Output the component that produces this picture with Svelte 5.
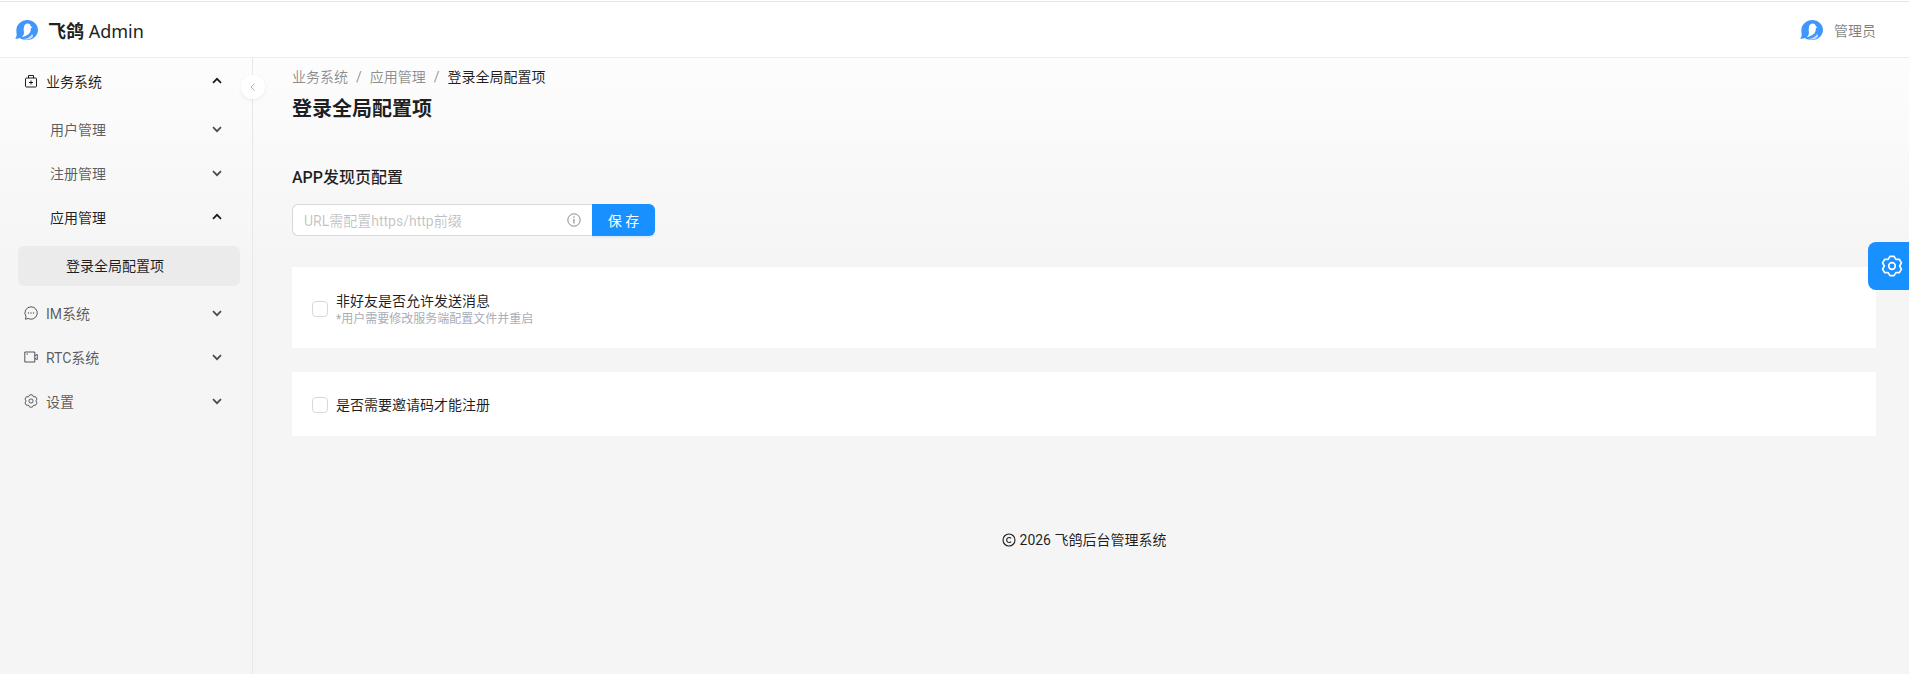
<script lang="ts">
// six-lobed cog, same outline for the menu icon and the floating button
function cogPath() {
	const pt = (deg: number, r: number) => {
		const a = (deg * Math.PI) / 180;
		return `${(12 + r * Math.cos(a)).toFixed(2)} ${(12 + r * Math.sin(a)).toFixed(2)}`;
	};
	let d = "";
	for (let i = 0; i < 6; i++) {
		const a = -90 + 60 * i;
		d += `${i ? "L" : "M"}${pt(a - 12, 10.8)} L${pt(a + 12, 10.8)} L${pt(a + 30, 8.4)} `;
	}
	return d + "Z";
}
const gear = cogPath();
</script>

{#snippet logo()}
  <svg class="logo" viewBox="0 0 67 58" aria-hidden="true">
    <path fill="#3f97fb" d="M36 0c17 0 31 13 31 29S53 58 36 58c-9 0-17-2-22-6-4 2-9 3-14 2 3-3 5-7 5-12-1-4-1-8-1-13C4 13 19 0 36 0z" />
    <path fill="#fff" d="M37 10c5 0 8 3 9 8l5 4-5 1c1 8-2 15-9 20-5 3-11 6-18 7 5-4 8-9 7-16-1-5-1-8 0-12 1-8 5-12 11-12z" />
    <path fill="#c5e0ff" d="M50 40c-2 5-7 9-13 12-5 2-10 3-15 3 5 2 10 3 15 2 7-1 12-4 16-10z" />
  </svg>
{/snippet}

{#snippet arrow(open)}
  <svg class="arrow" class:open viewBox="0 0 12 12" aria-hidden="true">
    <path d="M2 4.200 6 8.200l4-4" fill="none" stroke="currentColor" stroke-width="1.700" />
  </svg>
{/snippet}

<div class="page">
  <header class="top">
    <div class="brand">
      {@render logo()}
      <span class="brand-name"><b>飞鸽</b> Admin</span>
    </div>
    <div class="user">
      {@render logo()}
      <span>管理员</span>
    </div>
  </header>

  <div class="body">
    <aside class="side">
      <nav class="menu">
        <div class="group">
          <div class="item strong">
            <span class="label">
              <svg class="ico" viewBox="0 0 14 14" aria-hidden="true"><path d="M2.500 4h9a1 1 0 0 1 1 1v7a1 1 0 0 1-1 1h-9a1 1 0 0 1-1-1V5a1 1 0 0 1 1-1zM4.500 4V1.500h5V4M7 6.500v4M5 8.500h4" fill="none" stroke="currentColor" stroke-linejoin="round" /></svg>
              业务系统
            </span>
            {@render arrow(true)}
          </div>
          <div class="sub outer">
            <div class="item level2"><span>用户管理</span>{@render arrow(false)}</div>
            <div class="item level2"><span>注册管理</span>{@render arrow(false)}</div>
            <div class="group">
              <div class="item level2 strong"><span>应用管理</span>{@render arrow(true)}</div>
              <div class="sub inner">
                <div class="item level3 active"><span>登录全局配置项</span></div>
              </div>
            </div>
          </div>
        </div>
        <div class="item">
          <span class="label">
            <svg class="ico" viewBox="0 0 14 14" aria-hidden="true"><path d="M7 .8a6.200 6.200 0 1 1-2.800 11.700L1.500 13.200l.5-2.700A6.200 6.200 0 0 1 7 .8z" fill="none" stroke="currentColor" stroke-linejoin="round" /><circle cx="4.500" cy="7" r=".7" fill="currentColor" /><circle cx="7" cy="7" r=".7" fill="currentColor" /><circle cx="9.500" cy="7" r=".7" fill="currentColor" /></svg>
            IM系统
          </span>
          {@render arrow(false)}
        </div>
        <div class="item">
          <span class="label">
            <svg class="ico" viewBox="0 0 14 14" aria-hidden="true"><path d="M.8 2h10v10H.8zM10.800 5.500l2.500-1v5l-2.500-1M2.500 4h1.500" fill="none" stroke="currentColor" /></svg>
            RTC系统
          </span>
          {@render arrow(false)}
        </div>
        <div class="item">
          <span class="label">
            <svg class="ico" viewBox="0 0 24 24" aria-hidden="true"><path d={gear} fill="none" stroke="currentColor" stroke-width="1.600" stroke-linejoin="round" /><circle cx="12" cy="12" r="3.600" fill="none" stroke="currentColor" stroke-width="1.600" /></svg>
            设置
          </span>
          {@render arrow(false)}
        </div>
      </nav>
      <button type="button" class="collapse" aria-label="收起">
        <svg viewBox="0 0 12 12" aria-hidden="true"><path d="M7.500 2.500 4 6l3.500 3.500" fill="none" stroke="currentColor" /></svg>
      </button>
    </aside>

    <main class="main">
      <div class="crumbs">
        <span>业务系统</span><i>/</i><span>应用管理</span><i>/</i><span class="current">登录全局配置项</span>
      </div>
      <h1>登录全局配置项</h1>

      <h2>APP发现页配置</h2>
      <div class="field">
        <div class="input">
          <span class="placeholder">URL需配置https/http前缀</span>
          <svg viewBox="0 0 14 14" aria-hidden="true"><circle cx="7" cy="7" r="6.200" fill="none" stroke="currentColor" /><path d="M7 6v4.400" stroke="currentColor" stroke-width="1.200" /><circle cx="7" cy="4" r=".8" fill="currentColor" /></svg>
        </div>
        <button type="button" class="save">保 存</button>
      </div>

      <section class="card first">
        <span class="check"></span>
        <div>
          <div class="card-title">非好友是否允许发送消息</div>
          <div class="hint">*用户需要修改服务端配置文件并重启</div>
        </div>
      </section>
      <section class="card second">
        <span class="check"></span>
        <div class="card-title">是否需要邀请码才能注册</div>
      </section>

      <footer class="foot">
        <svg viewBox="0 0 14 14" aria-hidden="true"><circle cx="7" cy="7" r="6" fill="none" stroke="currentColor" stroke-width="1.100" /><path d="M9.100 5.400A2.500 2.500 0 1 0 9.100 8.600" fill="none" stroke="currentColor" stroke-width="1.100" /></svg>
        <span>2026 飞鸽后台管理系统</span>
      </footer>
    </main>
  </div>

  <button type="button" class="float" aria-label="设置">
    <svg viewBox="0 0 24 24" aria-hidden="true"><path d={gear} fill="none" stroke="currentColor" stroke-width="1.800" stroke-linejoin="round" /><circle cx="12" cy="12" r="3.600" fill="none" stroke="currentColor" stroke-width="1.800" /></svg>
  </button>
</div>

<style>
  :global(body) {
    margin: 0;
    font-family: Roboto, "Noto Sans CJK SC", sans-serif;
  }

  .page {
    position: relative;
    height: 674px;
    display: flex;
    flex-direction: column;
    overflow: hidden;
    background: linear-gradient(#fff, #f5f5f5 260px);
    color: rgba(0, 0, 0, 0.88);
    font-size: 14px;
    padding-top: 1px;
    box-sizing: border-box;
  }

  .top {
    height: 57px;
    flex: none;
    box-sizing: border-box;
    display: flex;
    align-items: center;
    justify-content: space-between;
    padding: 0 33px 0 15px;
    background: #fff;
    border-top: 1px solid #e5e5e5;
    border-bottom: 1px solid #ededed;
  }

  .brand,
  .user {
    display: flex;
    align-items: center;
  }

  .logo {
    width: 23px;
    height: 20px;
  }

  .brand-name {
    margin-left: 10px;
    font-family: "Noto Sans", "Noto Sans CJK SC", sans-serif;
    font-size: 18px;
    color: #222;
  }

  .brand-name b {
    font-weight: 700;
  }

  .user {
    gap: 11px;
    padding-top: 1px;
    font-size: 14px;
    color: rgba(0, 0, 0, 0.5);
  }

  .body {
    flex: 1;
    display: flex;
    min-height: 0;
  }

  .side {
    position: relative;
    width: 253px;
    flex: none;
    box-sizing: border-box;
    border-right: 1px solid #e8e8e8;
  }

  .menu,
  .group,
  .sub {
    display: flex;
    flex-direction: column;
    gap: 4px;
  }

  .menu {
    padding-top: 3px;
  }

  .sub {
    padding-top: 4px;
  }

  .sub.inner {
    padding-top: 5px;
  }

  .sub.outer {
    padding-bottom: 3px;
  }

  .item {
    height: 40px;
    display: flex;
    align-items: center;
    justify-content: space-between;
    padding: 0 29px 0 24px;
    color: rgba(0, 0, 0, 0.65);
  }

  .item.strong {
    color: rgba(0, 0, 0, 0.88);
  }

  .label {
    display: flex;
    align-items: center;
    gap: 8px;
  }

  .ico {
    width: 14px;
    height: 14px;
  }

  .level2 {
    padding-left: 50px;
  }

  .level3 {
    margin: 0 12px 0 18px;
    padding-left: 48px;
    padding-bottom: 2px;
    box-sizing: border-box;
    border-radius: 6px;
    color: rgba(0, 0, 0, 0.88);
    background: rgba(0, 0, 0, 0.04);
  }

  .arrow {
    width: 12px;
    height: 12px;
    color: rgba(0, 0, 0, 0.7);
  }

  .arrow.open {
    transform: rotate(180deg);
    color: rgba(0, 0, 0, 0.9);
  }

  .collapse {
    position: absolute;
    top: 17px;
    right: -13px;
    width: 24px;
    height: 24px;
    padding: 6px;
    border: 0;
    border-radius: 50%;
    background: #fff;
    color: rgba(0, 0, 0, 0.3);
    box-shadow: 0 2px 8px -2px rgba(0, 0, 0, 0.05), 0 1px 4px -1px rgba(25, 15, 15, 0.07);
  }

  .collapse svg {
    display: block;
  }

  .main {
    flex: 1;
    min-width: 0;
    padding: 8px 33px 0 39px;
  }

  .crumbs {
    display: flex;
    align-items: center;
    height: 22px;
    line-height: 22px;
    color: rgba(0, 0, 0, 0.45);
  }

  .crumbs i {
    font-style: normal;
    margin: 0 8px;
  }

  .current {
    color: rgba(0, 0, 0, 0.88);
  }

  h1 {
    margin: 5px 0 0;
    font-size: 20px;
    line-height: 32px;
    font-weight: 600;
  }

  h2 {
    margin: 42px 0 0;
    font-size: 16px;
    line-height: 22px;
    font-weight: 500;
  }

  .field {
    display: flex;
    width: 363px;
    height: 32px;
    margin-top: 15px;
  }

  .input {
    flex: 1;
    display: flex;
    align-items: center;
    justify-content: space-between;
    box-sizing: border-box;
    padding: 0 11px;
    background: #fff;
    border: 1px solid #d9d9d9;
    border-right: 0;
    border-radius: 6px 0 0 6px;
    color: rgba(0, 0, 0, 0.25);
  }

  .input svg {
    width: 14px;
    height: 14px;
    color: rgba(0, 0, 0, 0.45);
  }

  .save {
    width: 63px;
    border: 0;
    padding: 0;
    border-radius: 0 6px 6px 0;
    background: #1890ff;
    color: #fff;
    font: inherit;
    box-shadow: 0 2px 0 rgba(5, 145, 255, 0.1);
  }

  .card {
    display: flex;
    align-items: center;
    gap: 8px;
    box-sizing: border-box;
    padding: 2px 20px 0;
    background: #fff;
  }

  .card.first {
    height: 81px;
    margin-top: 31px;
  }

  .card.second {
    height: 64px;
    margin-top: 24px;
  }

  .check {
    width: 16px;
    height: 16px;
    box-sizing: border-box;
    border: 1px solid #d9d9d9;
    border-radius: 4px;
    background: #fff;
  }

  .card-title {
    line-height: 20px;
  }

  .hint {
    font-size: 12px;
    line-height: 16px;
    color: #a8aeb8;
  }

  .foot {
    display: flex;
    align-items: center;
    justify-content: center;
    gap: 4px;
    margin-top: 94px;
    line-height: 20px;
    font-size: 14px;
  }

  .foot svg {
    width: 14px;
    height: 14px;
  }

  .float {
    position: absolute;
    top: 242px;
    right: 0;
    width: 41px;
    height: 48px;
    padding: 0 0 0 6px;
    border: 0;
    border-radius: 8px 0 0 8px;
    background: #1890ff;
    color: #fff;
  }

  .float svg {
    display: block;
    width: 22px;
    height: 22px;
    margin: 0 auto;
  }
</style>
